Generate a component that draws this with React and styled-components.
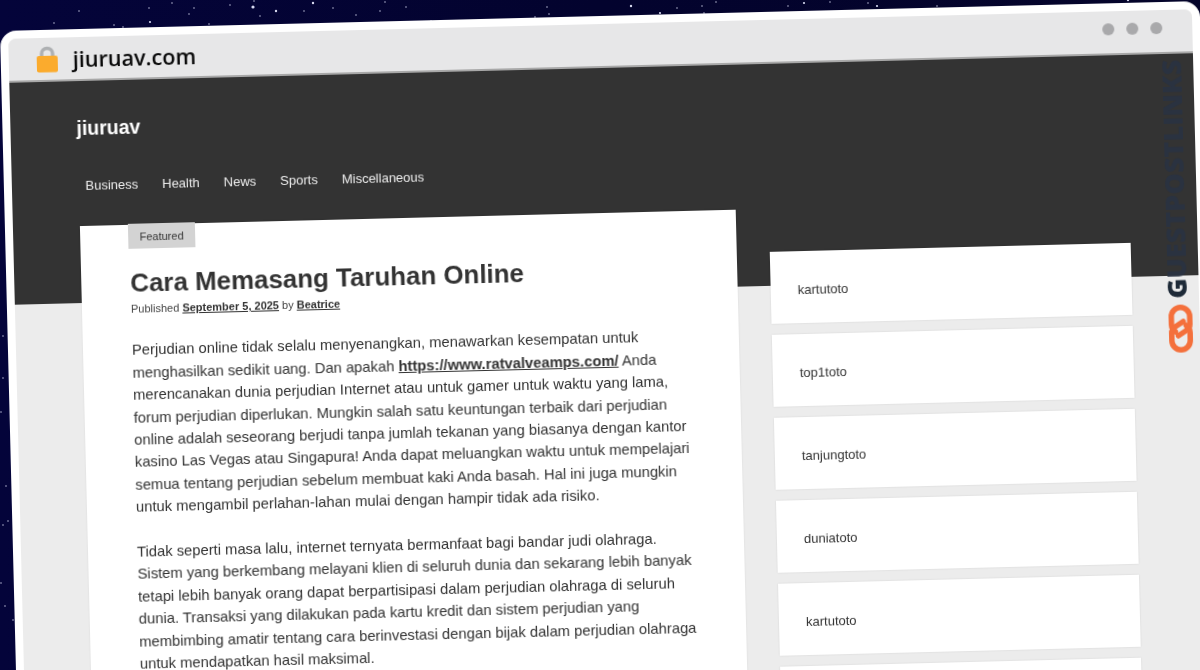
import styled, { createGlobalStyle } from "styled-components";

const GlobalStyle = createGlobalStyle`
    html, body {
        margin: 0;
        padding: 0;
        background: #03032e;
        font-family: "Liberation Sans", Arial, sans-serif;
    }
`

const Page = styled.div`
    position: relative;
    width: 1200px;
    height: 670px;
    padding-top: 31px;
    box-sizing: border-box;
    overflow: hidden;
    background: linear-gradient(90deg, #04043a 0%, #03032e 50%, #04042a 100%);
`

const Stars = styled.svg`
    position: absolute;
    top: 0;
    left: 0;
    width: 1200px;
    height: 670px;
`

const BrowserWindow = styled.div`
    position: relative;
    box-sizing: border-box;
    width: 1200px;
    height: 900px;
    border: 8px solid #fff;
    border-radius: 16px;
    background: #ececec;
    transform-origin: 0 0;
    transform: rotate(-1.43deg);
    filter: blur(0.3px);
    overflow: hidden;
`

const TitleBar = styled.div`
    box-sizing: border-box;
    height: 44px;
    display: flex;
    align-items: center;
    padding: 0 30px 0 28px;
    background: #e7e7e8;
    border-bottom: 2px solid #a8a8a8;
`

const Address = styled.span`
    margin-left: 15px;
    font-family: "Open Sans", sans-serif;
    font-weight: 600;
    font-size: 21.6px;
    color: #0a0a0a;
`

const Dots = styled.div`
    margin: 0 0 6px auto;
    display: flex;
    gap: 12px;
`

const Dot = styled.span`
    width: 12px;
    height: 12px;
    border-radius: 50%;
    background: #a9a9ab;
`

const Hero = styled.header`
    box-sizing: border-box;
    height: 222px;
    padding: 35px 0 0 66px;
    background: #333;
`

const SiteTitle = styled.div`
    font-size: 19.5px;
    line-height: 24px;
    font-weight: bold;
    color: #fff;
`

const Nav = styled.nav`
    display: flex;
    gap: 24px;
    margin: 38px 0 0 7.5px;
`

const NavItem = styled.span`
    font-size: 13px;
    line-height: 16px;
    color: #eee;
`

const Content = styled.div`
    display: flex;
    align-items: flex-start;
    margin-top: -77px;
    padding-left: 67px;
`

const Article = styled.article`
    position: relative;
    box-sizing: border-box;
    width: 656px;
    height: 700px;
    padding: 42px 50px 0 49px;
    background: #fff;
    color: #333;
    box-shadow: 0 0 2px rgba(0, 0, 0, 0.08);
`

const Badge = styled.span`
    position: absolute;
    top: -1px;
    left: 48px;
    width: 67px;
    height: 25px;
    display: flex;
    align-items: center;
    justify-content: center;
    background: #d3d3d3;
    font-size: 11px;
    color: #333;
`

const Title = styled.h1`
    margin: 0;
    font-size: 25.9px;
    line-height: 32px;
    font-weight: bold;
`

const Meta = styled.div`
    margin-top: 3px;
    font-size: 11px;
    line-height: 15px;
    color: #444;
    a {
        font-weight: bold;
        color: #333;
        text-decoration: underline;
    }
`

const Paragraph = styled.p`
    margin: 22.4px 0 20.4px 0;
    width: 558px;
    font-size: 14.77px;
    line-height: 22.4px;
    a {
        font-weight: bold;
        color: #333;
        text-decoration: underline;
    }
`

const Sidebar = styled.aside`
    display: flex;
    flex-direction: column;
    gap: 11px;
    width: 361px;
    margin: 43px 0 0 33px;
`

const SideCard = styled.div`
    box-sizing: border-box;
    height: 72px;
    display: flex;
    align-items: center;
    padding: 4px 0 0 27px;
    background: #fff;
    font-size: 13px;
    color: #333;
    box-shadow: 0 0 2px rgba(0, 0, 0, 0.1);
`

const Watermark = styled.div`
    position: absolute;
    top: 50px;
    right: 8px;
    display: flex;
    flex-direction: column;
    align-items: center;
    gap: 6px;
`

const WatermarkText = styled.span`
    writing-mode: vertical-rl;
    transform: rotate(180deg);
    font-family: "Open Sans", sans-serif;
    font-weight: 800;
    font-size: 27px;
    line-height: 28px;
    color: #2a3240;
`

const WatermarkInitial = styled.span`
    color: #1e2a38;
`

const ChainWrap = styled.div`
    display: flex;
    transform: translateX(3px);
`

const stars = [
    [79, 11], [149, 8], [172, 3], [194, 8], [189, 14], [230, 5], [253, 7, 1.6], [254, 1], [260, 16],
    [276, 11, 1.2], [313, 3, 1.2], [304, 11], [333, 8], [356, 15], [380, 11], [385, 2], [406, 7],
    [431, 21], [547, 7], [549, 14], [535, 17], [54, 23], [114, 25], [123, 27], [150, 22, 1.1], [209, 24],
    [631, 6, 1.2], [660, 13, 1.1], [677, 8], [702, 6], [716, 2], [704, 13], [788, 6], [804, 3, 1.1],
    [830, 2], [868, 3], [877, 6, 1.1], [937, 6], [1128, 0, 1.2],
    [3, 336], [3, 378], [1, 412], [6, 486], [3, 525], [8, 521], [1, 583], [5, 606], [13, 620],
]

const sidebarItems = ["kartutoto", "top1toto", "tanjungtoto", "duniatoto", "kartutoto", "jituplay"]

const LockIcon = () => (
    <svg width="21" height="27" viewBox="0 0 21 27">
        <path d="M5 13V8a5.500 5.500 0 0 1 11 0v5" fill="none" stroke="#aeb0b2" strokeWidth="3.500" />
        <rect x="0" y="10" width="21" height="16.500" rx="2" fill="#fbab2d" />
    </svg>
)

const ChainIcon = () => (
    <svg width="24" height="48" viewBox="0 0 24 48">
        <g fill="none" stroke="#f4703c" strokeWidth="5.500" strokeLinecap="round">
            <path d="M6.500 27C3.800 25 2.800 23 2.800 20V12a9.200 9.200 0 0 1 18.400 0v8c0 3-2 5-4.500 6.500L9.500 31" />
            <path d="M17.500 21C20.200 23 21.200 25 21.200 28v8a9.200 9.200 0 0 1-18.400 0v-8c0-3 2-5 4.500-6.500l7.200-4.500" />
        </g>
    </svg>
)

export default function App() {
    return (
        <Page>
            <GlobalStyle />
            <Stars viewBox="0 0 1200 670">
                {stars.map(([x, y, r = 0.7], i) => (
                    <circle key={i} cx={x} cy={y} r={r} fill="#d5d8ee" />
                ))}
            </Stars>
            <BrowserWindow>
                <TitleBar>
                    <LockIcon />
                    <Address>jiuruav.com</Address>
                    <Dots>
                        <Dot />
                        <Dot />
                        <Dot />
                    </Dots>
                </TitleBar>
                <Hero>
                    <SiteTitle>jiuruav</SiteTitle>
                    <Nav>
                        <NavItem>Business</NavItem>
                        <NavItem>Health</NavItem>
                        <NavItem>News</NavItem>
                        <NavItem>Sports</NavItem>
                        <NavItem>Miscellaneous</NavItem>
                    </Nav>
                </Hero>
                <Content>
                    <Article>
                        <Badge>Featured</Badge>
                        <Title>Cara Memasang Taruhan Online</Title>
                        <Meta>
                            Published <a>September 5, 2025</a> by <a>Beatrice</a>
                        </Meta>
                        <Paragraph>
                            Perjudian online tidak selalu menyenangkan, menawarkan kesempatan untuk
                            menghasilkan sedikit uang. Dan apakah <a>https://www.ratvalveamps.com/</a> Anda
                            merencanakan dunia perjudian Internet atau untuk gamer untuk waktu yang lama,
                            forum perjudian diperlukan. Mungkin salah satu keuntungan terbaik dari perjudian
                            online adalah seseorang berjudi tanpa jumlah tekanan yang biasanya dengan kantor
                            kasino Las Vegas atau Singapura! Anda dapat meluangkan waktu untuk mempelajari
                            semua tentang perjudian sebelum membuat kaki Anda basah. Hal ini juga mungkin
                            untuk mengambil perlahan-lahan mulai dengan hampir tidak ada risiko.
                        </Paragraph>
                        <Paragraph>
                            Tidak seperti masa lalu, internet ternyata bermanfaat bagi bandar judi olahraga.
                            Sistem yang berkembang melayani klien di seluruh dunia dan sekarang lebih banyak
                            tetapi lebih banyak orang dapat berpartisipasi dalam perjudian olahraga di seluruh
                            dunia. Transaksi yang dilakukan pada kartu kredit dan sistem perjudian yang
                            membimbing amatir tentang cara berinvestasi dengan bijak dalam perjudian olahraga
                            untuk mendapatkan hasil maksimal.
                        </Paragraph>
                    </Article>
                    <Sidebar>
                        {sidebarItems.map((item, i) => (
                            <SideCard key={i}>{item}</SideCard>
                        ))}
                    </Sidebar>
                </Content>
                <Watermark>
                    <WatermarkText><WatermarkInitial>G</WatermarkInitial>UESTPOSTLINKS</WatermarkText>
                    <ChainWrap>
                        <ChainIcon />
                    </ChainWrap>
                </Watermark>
            </BrowserWindow>
        </Page>
    );
}
